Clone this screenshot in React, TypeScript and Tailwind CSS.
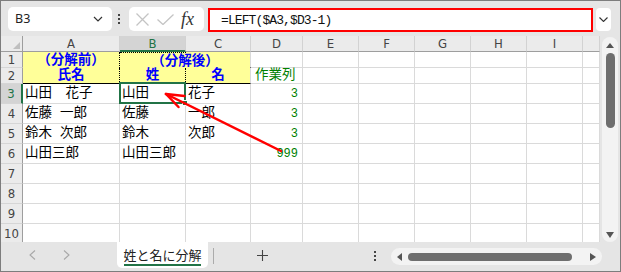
import React from "react";

const HF = "font-['Liberation_Sans_Narrow','DejaVu_Sans_Condensed','Liberation_Sans',sans-serif]";
const HDR = `flex items-center justify-center bg-[#ebebeb] border-r border-b border-r-[#d2d2d2] border-b-[#9e9e9e] text-[#444] text-[13px] leading-none ${HF}`;
const HDR_SEL = `flex items-center justify-center bg-[#d4d4d4] border-r border-r-[#d2d2d2] border-b-2 border-b-[#217346] text-[#217346] text-[13px] leading-none ${HF}`;
const RH = `flex items-center justify-center bg-[#ebebeb] border-r border-b border-r-[#9e9e9e] border-b-[#d6d6d6] text-[#444] text-[13px] leading-none ${HF}`;
const RH_SEL = `flex items-center justify-center bg-[#d4d4d4] border-r-2 border-b border-r-[#217346] border-b-[#d6d6d6] text-[#217346] text-[13px] leading-none ${HF}`;
const CF = "font-['Liberation_Mono','Noto_Sans_CJK_JP',monospace]";
const CELL = `flex items-center border-r border-b border-[#dadada] bg-white whitespace-nowrap leading-none ${CF}`;
const TXT = `${CELL} pl-[2px] text-[13.5px] text-black`;
const NUM = `${CELL} justify-end pr-[4px] text-[12px] text-[#008000]`;
const YEL = `flex items-center justify-center bg-[#ffff99] whitespace-nowrap leading-none text-[13.5px] font-bold text-[#0000ff] ${CF}`;

function Empty({ n }: { n: number }) {
  return (
    <>
      {Array.from({ length: n }).map((_, i) => (
        <div key={i} className={CELL} />
      ))}
    </>
  );
}

function Dots() {
  return (
    <div className="flex flex-col items-center justify-center gap-[2px]">
      <div className="h-[2px] w-[2px] bg-[#444]" />
      <div className="h-[2px] w-[2px] bg-[#444]" />
      <div className="h-[2px] w-[2px] bg-[#444]" />
    </div>
  );
}

function FormulaBar() {
  return (
    <div className="flex h-[35px] shrink-0 items-start pl-[7px] pt-[6px]">
      <div className="flex h-[24px] w-[104px] items-center justify-between rounded-[5px] bg-white pl-[7px] pr-[9px]">
        <span className="text-[12.5px] leading-none text-[#222] font-['Noto_Sans','Liberation_Sans',sans-serif]">B3</span>
        <svg width="10" height="6" viewBox="0 0 10 6">
          <path d="M1 1 L5 5 L9 1" fill="none" stroke="#333" strokeWidth="1.2" />
        </svg>
      </div>
      <div className="ml-[6px] flex h-[24px] w-[2px] items-center">
        <Dots />
      </div>
      <div className="ml-[9px] flex h-[24px] w-[75px] items-center rounded-[5px] bg-white pl-[7px]">
        <svg width="13" height="13" viewBox="0 0 13 13">
          <path d="M0.5 0.5 L12.5 12.5 M12.5 0.5 L0.5 12.5" stroke="#c4c4c4" strokeWidth="1.3" fill="none" />
        </svg>
        <svg className="ml-[8px]" width="17" height="11" viewBox="0 0 17 11">
          <path d="M0.5 5.5 L6 10.5 L16.5 0.5" stroke="#c4c4c4" strokeWidth="1.3" fill="none" />
        </svg>
        <span className="ml-[7px] text-[18px] italic leading-none text-[#333] font-['Liberation_Serif',serif]">fx</span>
      </div>
      <div className="ml-[4px] mt-[1px] flex h-[24px] w-[385px] items-center border-2 border-[#ff0000] bg-white pl-[11px]">
        <span className={`text-[13px] tracking-[-0.9px] leading-none text-[#111] ${CF}`}>=LEFT($A3,$D3-1)</span>
      </div>
      <div className="ml-[3px] mt-[1px] flex h-[23px] w-[15px] items-center justify-center rounded-[4px] bg-white">
        <svg width="9" height="5" viewBox="0 0 9 5">
          <path d="M0.5 0.5 L4.5 4.5 L8.5 0.5" fill="none" stroke="#333" strokeWidth="1.1" />
        </svg>
      </div>
    </div>
  );
}

function Grid() {
  return (
    <div className="grid h-[206px] w-[599px] shrink-0 content-start overflow-hidden grid-cols-[22px_97px_66px_65px_52px_56px_56px_56px_56px_56px_17px] grid-rows-[16px_16px_16px_20px_20px_20px_20px_20px_20px_20px_20px]">
      {/* header */}
      <div className="flex items-end justify-end bg-[#ebebeb] border-r border-b border-r-[#9e9e9e] border-b-[#9e9e9e] pb-[2px] pr-[2px]">
        <svg width="7" height="7" viewBox="0 0 7 7">
          <polygon points="7,0 7,7 0,7" fill="#bfbfbf" />
        </svg>
      </div>
      <div className={HDR}>A</div>
      <div className={HDR_SEL}>B</div>
      <div className={HDR}>C</div>
      <div className={HDR}>D</div>
      <div className={HDR}>E</div>
      <div className={HDR}>F</div>
      <div className={HDR}>G</div>
      <div className={HDR}>H</div>
      <div className={HDR}>I</div>
      <div className={HDR}></div>

      {/* row 1 */}
      <div className={RH}>1</div>
      <div className={`${YEL} border-r border-r-black [border-right-style:dotted] pt-[2px]`}>（分解前）</div>
      <div className="col-span-2 flex flex-col bg-[#ffff99] border-r border-b border-r-[#dadada] border-b-black [border-bottom-style:dotted]">
        <div className="h-0 w-[66px] border-t border-dotted border-black" />
        <div className={`${YEL} flex-1 pt-[2px]`}>（分解後）</div>
      </div>
      <Empty n={7} />

      {/* row 2 */}
      <div className={RH}>2</div>
      <div className={`${YEL} border-r border-b border-r-black border-b-black [border-right-style:dotted]`}>氏名</div>
      <div className={`${YEL} border-r border-b border-r-black border-b-black [border-right-style:dotted]`}>姓</div>
      <div className={`${YEL} border-r border-b border-r-[#dadada] border-b-black`}>名</div>
      <div className={`${CELL} pl-[4px] text-[13.5px] text-[#008000]`}>作業列</div>
      <Empty n={6} />

      {/* row 3 */}
      <div className={RH_SEL}>3</div>
      <div className={TXT}>山田　花子</div>
      <div className={`${TXT} relative`}>
        山田
        <div className="absolute left-[-1px] top-[-2px] h-[22px] w-[67px] border-2 border-[#217346]" />
        <div className="absolute bottom-[-3px] right-[-3px] h-[6px] w-[6px] border border-white bg-[#217346]" />
      </div>
      <div className={TXT}>花子</div>
      <div className={NUM}>3</div>
      <Empty n={6} />

      {/* row 4 */}
      <div className={RH}>4</div>
      <div className={TXT}>佐藤 一郎</div>
      <div className={TXT}>佐藤</div>
      <div className={TXT}>一郎</div>
      <div className={NUM}>3</div>
      <Empty n={6} />

      {/* row 5 */}
      <div className={RH}>5</div>
      <div className={TXT}>鈴木 次郎</div>
      <div className={TXT}>鈴木</div>
      <div className={TXT}>次郎</div>
      <div className={NUM}>3</div>
      <Empty n={6} />

      {/* row 6 */}
      <div className={RH}>6</div>
      <div className={TXT}>山田三郎</div>
      <div className={TXT}>山田三郎</div>
      <div className={TXT}></div>
      <div className={NUM}>999</div>
      <Empty n={6} />

      {[7, 8, 9, 10].map((r) => (
        <React.Fragment key={r}>
          <div className={RH}>{r}</div>
          <Empty n={10} />
        </React.Fragment>
      ))}
    </div>
  );
}

function VScroll() {
  return (
    <div className="flex w-[20px] shrink-0 pl-[2px] pt-[1px]">
      <div className="flex h-[205px] w-[16px] flex-col items-center rounded-full bg-[#f3f3f3] pt-[6px] pb-[4px]">
        <svg width="8" height="5" viewBox="0 0 8 5">
          <polygon points="4,0 8,5 0,5" fill="#555" />
        </svg>
        <div className="mt-[5px] h-[75px] w-[9px] rounded-full bg-[#6e6e6e]" />
        <div className="flex-1" />
        <svg width="8" height="6" viewBox="0 0 8 6">
          <polygon points="0,0 8,0 4,6" fill="#555" />
        </svg>
      </div>
    </div>
  );
}

function TabBar() {
  return (
    <div className="flex h-[26px] shrink-0 items-stretch">
      <div className="flex w-[114px] items-center pl-[28px]">
        <svg width="7" height="10" viewBox="0 0 7 10">
          <path d="M6 0.5 L1 5 L6 9.5" fill="none" stroke="#a8a8a8" strokeWidth="1.1" />
        </svg>
        <svg className="ml-[27px]" width="7" height="10" viewBox="0 0 7 10">
          <path d="M1 0.5 L6 5 L1 9.5" fill="none" stroke="#a8a8a8" strokeWidth="1.1" />
        </svg>
      </div>
      <div className="ml-[2px] flex w-[91px] flex-col items-center rounded-b-[5px] bg-white pt-[5px]">
        <span className="text-[13px] leading-[16px] text-[#222] font-['Noto_Sans_CJK_JP',sans-serif]">姓と名に分解</span>
        <div className="mt-[1px] h-[2px] w-[77px] bg-[#217346]" />
      </div>
      <div className="ml-[5px] mt-[6px] h-[16px] w-px bg-[#ababab]" />
      <div className="ml-[43px] flex items-center">
        <svg width="11" height="11" viewBox="0 0 11 11">
          <path d="M5.5 0 V11 M0 5.5 H11" stroke="#444" strokeWidth="1.1" />
        </svg>
      </div>
      <div className="ml-[106px] flex items-center pt-[1px]">
        <Dots />
      </div>
      <div className="ml-[15px] mt-[6px] flex h-[17px] w-[211px] items-center rounded-full bg-[#f3f3f3] pl-[6px]">
        <svg width="5" height="8" viewBox="0 0 5 8">
          <polygon points="5,0 5,8 0,4" fill="#555" />
        </svg>
        <div className="ml-[6px] h-[8px] w-[164px] rounded-full bg-[#6e6e6e]" />
        <svg className="ml-[18px]" width="6" height="8" viewBox="0 0 6 8">
          <polygon points="0,0 6,4 0,8" fill="#555" />
        </svg>
      </div>
    </div>
  );
}

export default function App() {
  return (
    <div className="relative flex h-[272px] w-[621px] flex-col overflow-hidden border border-[#7d7d7d] bg-[#e5e5e5]">
      <FormulaBar />
      <div className="flex h-[206px] shrink-0">
        <Grid />
        <VScroll />
      </div>
      <TabBar />
      <svg
        className="pointer-events-none absolute left-0 top-0"
        width="619"
        height="270"
        viewBox="1 1 619 270"
      >
        <g stroke="#ff0000" strokeWidth="2.5" strokeLinecap="round" fill="none">
          <path d="M281 151 L166 94" />
          <path d="M166 94 L184.5 96" />
          <path d="M166 94 L178.5 107" />
        </g>
      </svg>
    </div>
  );
}
